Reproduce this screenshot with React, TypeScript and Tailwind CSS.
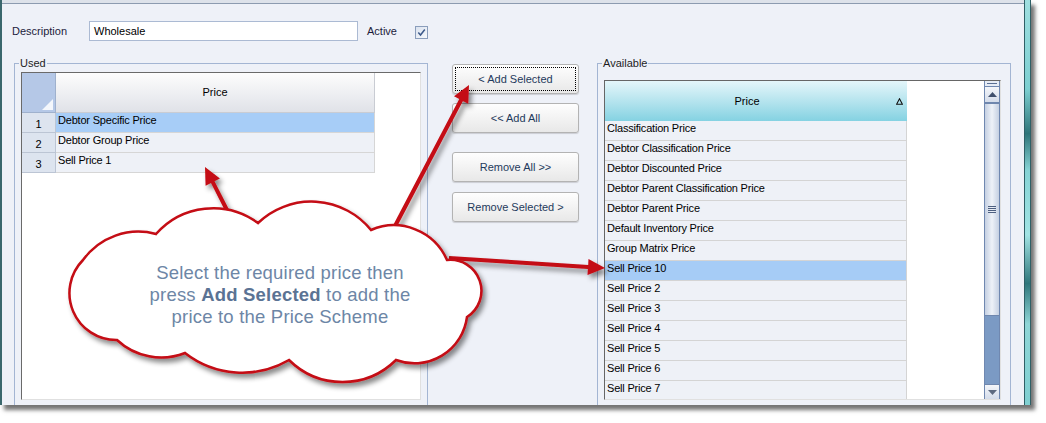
import React from 'react'

const usedRows = ['Debtor Specific Price', 'Debtor Group Price', 'Sell Price 1']

const availableRows = [
  'Classification Price',
  'Debtor Classification Price',
  'Debtor Discounted Price',
  'Debtor Parent Classification Price',
  'Debtor Parent Price',
  'Default Inventory Price',
  'Group Matrix Price',
  'Sell Price 10',
  'Sell Price 2',
  'Sell Price 3',
  'Sell Price 4',
  'Sell Price 5',
  'Sell Price 6',
  'Sell Price 7',
]

// arrow polygon from tail to tip
function arrowPoints(x1: number, y1: number, x2: number, y2: number, w = 4, L = 17, H = 8) {
  const dx = x2 - x1
  const dy = y2 - y1
  const len = Math.hypot(dx, dy)
  const ux = dx / len
  const uy = dy / len
  const nx = -uy
  const ny = ux
  const bx = x2 - ux * L
  const by = y2 - uy * L
  const pts = [
    [x1 + (nx * w) / 2, y1 + (ny * w) / 2],
    [bx + (nx * w) / 2, by + (ny * w) / 2],
    [bx + nx * H, by + ny * H],
    [x2, y2],
    [bx - nx * H, by - ny * H],
    [bx - (nx * w) / 2, by - (ny * w) / 2],
    [x1 - (nx * w) / 2, y1 - (ny * w) / 2],
  ]
  return pts.map((p) => p.map((v) => v.toFixed(1)).join(',')).join(' ')
}

const cloudPath =
  'M 83 260 A 68 68 0 0 1 156 234 A 76 76 0 0 1 258 223 A 77 77 0 0 1 371 230 A 58 58 0 0 1 447 260 ' +
  'A 31 31 0 0 1 467 317 A 53 53 0 0 1 396 360 A 76 76 0 0 1 289 360 A 93 93 0 0 1 185 353 ' +
  'A 65 65 0 0 1 117 340 A 47 47 0 0 1 83 260 Z'

function Btn({ children, focus, className = '' }: { children: React.ReactNode; focus?: boolean; className?: string }) {
  return (
    <button
      className={`h-[30px] w-full rounded-[3px] border border-[#b3b3b3] bg-linear-to-b from-[#fefefe] to-[#e8e8e8] shadow-[0_1px_1px_rgba(0,0,0,0.15)] text-[11px] text-[#1f3a5c] flex items-center justify-center ${focus ? 'outline-1 outline-dotted outline-black outline-offset-[-4px]' : ''} ${className}`}
    >
      {children}
    </button>
  )
}

export default function App() {
  return (
    <div className="w-[1046px] h-[423px] bg-white overflow-hidden font-['Liberation_Sans',Arial,sans-serif] text-[11px] leading-[13px] text-black">
      <div className="relative w-[1031px] h-[405px] flex bg-[#eef1f8] shadow-[4px_5px_4px_rgba(0,0,0,0.55)]">
        <div className="w-[2px] bg-[#3a676d]" />

        <div className="flex-1 flex flex-col overflow-hidden">
          <div className="h-[4px] shrink-0 bg-[#dde2ea] border-b border-[#8c9bb0]" />

          {/* description row */}
          <div className="flex items-center mt-[17px] pl-[10px] h-[20px] shrink-0">
            <span className="w-[77px] text-[#1c1c3c]">Description</span>
            <div className="w-[269px] h-[20px] bg-white border border-[#abbad3] pl-[4px] flex items-center">Wholesale</div>
            <span className="ml-[9px] w-[48px] text-[#1c1c3c]">Active</span>
            <div className="mt-[2px] w-[13px] h-[13px] border border-[#8a9dbb] bg-linear-to-br from-[#dae2ef] to-[#f7f9fc] flex items-center justify-center">
              <svg width="9" height="9" viewBox="0 0 9 9">
                <path d="M1.3 4.6 L3.5 7 L7.8 1.5" stroke="#3d5a8a" strokeWidth="1.5" fill="none" />
              </svg>
            </div>
          </div>

          {/* body */}
          <div className="flex mt-[16px]">
            {/* Used */}
            <fieldset className="ml-[12px] w-[414px] h-[360px] shrink-0 border border-[#a3b5d3] px-[6px] pt-[2px]">
              <legend className="ml-[-2px] px-[1px] text-[#1e1e1e]">Used</legend>
              <div className="w-[400px] h-[328px] bg-white border border-[#e0e0e0] border-t-[#6a6a6a] border-l-[#6a6a6a]">
                <div className="flex h-[40px]">
                  <div className="w-[34px] bg-[#b5c8e7] border-r border-b border-[#9fb1cd] flex items-end justify-end p-[2px]">
                    <svg width="11" height="11" viewBox="0 0 11 11">
                      <polygon points="11,0 11,11 0,11" fill="#f4f7fc" />
                    </svg>
                  </div>
                  <div className="w-[319px] bg-linear-to-b from-[#fdfdfd] to-[#e0e2e8] border-r border-b border-[#c9ccd3] flex items-center justify-center">
                    Price
                  </div>
                </div>
                {usedRows.map((r, i) => (
                  <div key={r} className="flex h-[20px]">
                    <div className="w-[34px] bg-[#dde4ef] border-r border-b border-[#bcc5d4] flex items-center justify-center pt-[3px]">
                      {i + 1}
                    </div>
                    <div
                      className={`w-[319px] border-r border-b border-[#d6d6d6] pl-[2px] pt-[1px] tracking-[-0.2px] ${i === 0 ? 'bg-[#a7cdf7]' : 'bg-[#eef1f7]'}`}
                    >
                      {r}
                    </div>
                  </div>
                ))}
              </div>
            </fieldset>

            {/* buttons */}
            <div className="ml-[24px] w-[127px] shrink-0 flex flex-col pt-[7px]">
              <Btn focus>&lt; Add Selected</Btn>
              <Btn className="mt-[9px]">&lt;&lt; Add All</Btn>
              <Btn className="mt-[19px]">Remove All &gt;&gt;</Btn>
              <Btn className="mt-[10px]">Remove Selected &gt;</Btn>
            </div>

            {/* Available */}
            <fieldset className="ml-[18px] w-[414px] h-[360px] shrink-0 border border-[#a3b5d3] px-[6px] pt-[10px]">
              <legend className="ml-[-2px] px-[1px] text-[#1e1e1e]">Available</legend>
              <div className="w-[397px] h-[320px] flex bg-white border border-[#e0e0e0] border-t-[#666666] border-l-[#666666]">
                <div className="w-[302px] flex flex-col overflow-hidden">
                  <div className="h-[40px] shrink-0 flex items-center bg-linear-to-b from-[#e4f6fa] to-[#84d2e2]">
                    <span className="flex-1 text-center">Price</span>
                    <svg className="ml-[7px] mr-[4px]" width="7" height="7" viewBox="0 0 7 7">
                      <polygon points="3.5,0.8 6.4,6.3 0.6,6.3" fill="none" stroke="#111" strokeWidth="1.1" />
                    </svg>
                  </div>
                  {availableRows.map((r) => (
                    <div
                      key={r}
                      className={`h-[20px] shrink-0 border-r border-b border-[#d4d4d4] pl-[2px] pt-[1px] tracking-[-0.2px] ${r === 'Sell Price 10' ? 'bg-[#a6ccf6]' : 'bg-[#eef1f7]'}`}
                    >
                      {r}
                    </div>
                  ))}
                </div>
                <div className="flex-1 bg-white" />
                {/* scrollbar */}
                <div className="w-[16px] flex flex-col border-x border-[#7088b0] bg-[#7b9ac4]">
                  <div className="h-[6px] bg-[#e6ecf5] border-b border-[#7088b0] flex items-center justify-center">
                    <div className="w-[10px] h-px bg-[#5a6f94]" />
                  </div>
                  <div className="h-[17px] bg-linear-to-b from-[#f4f6fa] to-[#d4dcea] border-b-2 border-[#6f87ae] flex items-center justify-center">
                    <svg width="9" height="5" viewBox="0 0 9 5">
                      <polygon points="4.5,0 9,5 0,5" fill="#3f4f6c" />
                    </svg>
                  </div>
                  <div className="h-[212px] bg-linear-to-r from-[#c5d0e2] via-[#eef2f8] to-[#c5d0e2] border-b border-[#6f87ae] flex flex-col items-center justify-center gap-[1px]">
                    <div className="w-[8px] h-px bg-[#4d5f80]" />
                    <div className="w-[8px] h-px bg-[#4d5f80]" />
                    <div className="w-[8px] h-px bg-[#4d5f80]" />
                    <div className="w-[8px] h-px bg-[#4d5f80]" />
                  </div>
                  <div className="flex-1" />
                  <div className="h-[15px] bg-linear-to-b from-[#f4f6fa] to-[#d4dcea] border-t border-[#6f87ae] flex items-center justify-center">
                    <svg width="9" height="5" viewBox="0 0 9 5">
                      <polygon points="0,0 9,0 4.5,5" fill="#5d6a80" />
                    </svg>
                  </div>
                </div>
              </div>
            </fieldset>
          </div>
        </div>

        <div className="w-[7px] border-l border-r border-[#2f5f66] bg-[linear-gradient(to_bottom,#9fdfe0_0%,#7ccfd1_22%,#2e7479_33%,#86d3d5_42%,#a2e4e4_58%,#2f777c_70%,#8fd6d7_80%,#7fcfd1_100%)]" />

        {/* callout overlay */}
        <svg className="absolute left-0 top-0 pointer-events-none overflow-visible" width={1031} height={405}>
          <defs>
            <filter id="sh" x="-20%" y="-20%" width="150%" height="150%">
              <feDropShadow dx="3" dy="4" stdDeviation="2.5" floodColor="#000" floodOpacity="0.45" />
            </filter>
          </defs>
          <g filter="url(#sh)" fill="#c40a12">
            <polygon points={arrowPoints(229, 214, 205, 167)} />
            <polygon points={arrowPoints(394, 228, 469, 85)} />
            <polygon points={arrowPoints(449, 258, 605, 268)} />
          </g>
          <path d={cloudPath} fill="#ffffff" stroke="#c40a12" strokeWidth="2.5" filter="url(#sh)" />
        </svg>
        <div className="absolute left-[80px] top-[262px] w-[400px] text-center text-[18.5px] leading-[22px] tracking-[0.2px] text-[#6d86a6] pointer-events-none">
          Select the required price then
          <br />
          press <b className="text-[#5b7394]">Add Selected</b> to add the
          <br />
          price to the Price Scheme
        </div>
      </div>
    </div>
  )
}
